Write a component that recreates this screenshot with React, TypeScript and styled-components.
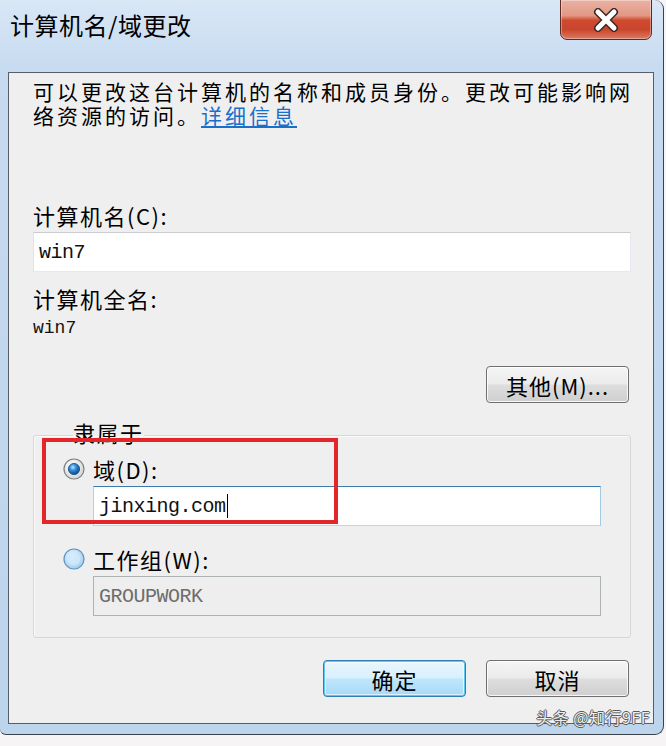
import React from 'react';
import styled, { createGlobalStyle } from 'styled-components';

const GlobalStyle = createGlobalStyle`
  html, body {
    margin: 0;
    padding: 0;
    background: #f6f4f4;
  }
  body {
    font-family: "Noto Sans CJK SC", "Noto Sans", sans-serif;
    color: #000;
  }
`;

const Radio: React.FC<{ checked?: boolean; id: string }> = ({ checked, id }) => (
  <RadioIcon width="22" height="22" viewBox="0 0 22 22">
    <defs>
      <radialGradient id={`${id}-ring`} cx="40%" cy="35%" r="70%">
        <stop offset="0%" stopColor={checked ? '#ffffff' : '#e8f5fd'} />
        <stop offset="100%" stopColor={checked ? '#d2d3d4' : '#9fcdef'} />
      </radialGradient>
      <radialGradient id={`${id}-dot`} cx="40%" cy="35%" r="65%">
        <stop offset="0%" stopColor="#b7e4ff" />
        <stop offset="45%" stopColor="#2d8ddc" />
        <stop offset="100%" stopColor="#0b4a8a" />
      </radialGradient>
    </defs>
    <circle cx="11" cy="11" r="10" fill={`url(#${id}-ring)`} stroke={checked ? '#7d8083' : '#5b94c4'} strokeWidth="1.2" />
    {checked ? (
      <circle cx="11" cy="11" r="5.6" fill={`url(#${id}-dot)`} stroke="#1b4a74" strokeWidth="0.8" />
    ) : (
      <circle cx="11" cy="11" r="6.5" fill="#cfe9fb" opacity="0.7" />
    )}
  </RadioIcon>
);

const App: React.FC = () => (
  <>
    <GlobalStyle />
    <Window>
      <TitleBar>
        <Title>计算机名/域更改</Title>
        <CloseButton aria-label="关闭">
          <svg width="34" height="24" viewBox="0 0 34 24">
            <path d="M9 4 L25 20 M25 4 L9 20" stroke="#3b2a28" strokeWidth="8" strokeLinecap="round" />
            <path d="M9 4 L25 20 M25 4 L9 20" stroke="#ffffff" strokeWidth="5" strokeLinecap="round" />
          </svg>
        </CloseButton>
      </TitleBar>

      <Panel>
        <Description>
          <DescLine>可以更改这台计算机的名称和成员身份。更改可能影响网</DescLine>
          <DescLine>
            络资源的访问。<DetailLink href="#">详细信息</DetailLink>
          </DescLine>
        </Description>

        <FieldLabel $top={74}>计算机名(C):</FieldLabel>
        <TextBox $top={5}>win7</TextBox>

        <FieldLabel $top={14}>计算机全名:</FieldLabel>
        <FullName>win7</FullName>

        <MoreRow>
          <DialogButton type="button">其他(M)...</DialogButton>
        </MoreRow>

        <GroupWrap>
          <GroupBox>
            <GroupTitle>隶属于</GroupTitle>
            <RadioRow>
              <Radio id="r-domain" checked />
              <RadioLabel>域(D):</RadioLabel>
            </RadioRow>
            <TextBox $state="focus" $indent={30}>
              jinxing.com<Caret />
            </TextBox>
            <RadioRow $top={18}>
              <Radio id="r-group" />
              <RadioLabel>工作组(W):</RadioLabel>
            </RadioRow>
            <TextBox $state="disabled" $indent={30}>GROUPWORK</TextBox>
          </GroupBox>
          <Highlight />
        </GroupWrap>

        <ButtonRow>
          <DialogButton type="button" $primary>确定</DialogButton>
          <DialogButton type="button">取消</DialogButton>
        </ButtonRow>
      </Panel>

      <Watermark>头条 @知行9FF</Watermark>
    </Window>
  </>
);

const Window = styled.div`
  position: relative;
  width: 664px;
  height: 735px;
  box-sizing: border-box;
  padding: 0 9px 10px 8px;
  background: linear-gradient(to bottom, #d9e7f6 0px, #c6daf0 72px, #bcd4ec 100%);
  border-right: 1px solid #3a414b;
  border-bottom: 1px solid #3a414b;
  border-radius: 0 9px 9px 6px;
  display: flex;
  flex-direction: column;
`;

const TitleBar = styled.div`
  height: 72px;
  display: flex;
  justify-content: space-between;
  align-items: flex-start;
  padding: 0 2px;
`;

const Title = styled.h1`
  margin: 11px 0 0;
  font-size: 24px;
  font-weight: 400;
  line-height: 28px;
  letter-spacing: 0.5px;
`;

const CloseButton = styled.div`
  width: 92px;
  height: 41px;
  margin-top: -1px;
  box-sizing: border-box;
  border: 1px solid #5b2a22;
  border-radius: 0 0 7px 7px;
  background: linear-gradient(
    to bottom,
    #eab2a4 0%,
    #e29883 40%,
    #cf4a2f 52%,
    #c9452b 75%,
    #dc7a5f 100%
  );
  box-shadow: inset 0 0 0 1px rgba(255, 255, 255, 0.35);
  display: flex;
  align-items: center;
  justify-content: center;
`;

const Panel = styled.div`
  height: 652px;
  box-sizing: border-box;
  border: 1px solid #585e66;
  background: #f0efef;
  padding: 8px 22px 0 24px;
  display: flex;
  flex-direction: column;
`;

const Description = styled.div`
  margin: 0 -22px 0 0;
  font-family: "Liberation Sans", "Noto Sans CJK SC", sans-serif;
  font-size: 21px;
  letter-spacing: 3px;
  line-height: 24px;
`;

const DescLine = styled.div`
  height: 24px;
  white-space: nowrap;
`;

const DetailLink = styled.a`
  color: #1a6fc9;
  text-decoration: underline;
`;

const FieldLabel = styled.div<{ $top: number }>`
  margin-top: ${p => p.$top}px;
  font-size: 22px;
  letter-spacing: 1.5px;
  line-height: 24px;
`;

const TextBox = styled.div<{ $top?: number; $indent?: number; $state?: 'normal' | 'focus' | 'disabled' }>`
  position: relative;
  margin-top: ${p => p.$top ?? 0}px;
  margin-left: ${p => p.$indent ?? 0}px;
  height: 40px;
  box-sizing: border-box;
  padding-left: 5px;
  display: flex;
  align-items: center;
  font-family: "Liberation Mono", "DejaVu Sans Mono", monospace;
  font-size: 20px;
  letter-spacing: -0.5px;
  border: 1px solid;
  ${p =>
    p.$state === 'focus'
      ? `border-color: #3d7bad #a4c9e3 #b7d9ed #b5cfe7; background: #fff; color: #111;`
      : p.$state === 'disabled'
      ? `border-color: #adb2b5; background: #efeeee; color: #6d6d6d;`
      : `border-color: #c9cbd0 #e3e9ef #e3e9ef #e2e3ea; background: #fff; color: #111;`}
`;

const Caret = styled.span`
  display: inline-block;
  width: 1px;
  height: 24px;
  margin-left: 1px;
  background: #000;
`;

const FullName = styled.div`
  margin-top: 8px;
  font-family: "Liberation Mono", "DejaVu Sans Mono", monospace;
  font-size: 18px;
  line-height: 20px;
  color: #111;
`;

const MoreRow = styled.div`
  margin-top: 28px;
  display: flex;
  justify-content: flex-end;
  padding-right: 2px;
`;

const DialogButton = styled.button<{ $primary?: boolean }>`
  width: 143px;
  height: 37px;
  box-sizing: border-box;
  padding: 0;
  font-family: "Noto Sans CJK SC", "Noto Sans", sans-serif;
  font-size: 22px;
  letter-spacing: 1px;
  color: #000;
  border-radius: 4px;
  border: 1px solid ${p => (p.$primary ? '#2d7fb5' : '#6f6f6f')};
  background: ${p =>
    p.$primary
      ? 'linear-gradient(to bottom, #eaf6fd 0%, #d9f0fc 48%, #bee6fd 52%, #a7d9f5 100%)'
      : 'linear-gradient(to bottom, #f5f5f5 0%, #ebebeb 48%, #dddddd 52%, #cfcfcf 100%)'};
  box-shadow: ${p =>
    p.$primary
      ? 'inset 0 0 0 1px #5fc8f2, inset 0 0 0 2px rgba(255,255,255,0.6)'
      : 'inset 0 0 0 1px rgba(255,255,255,0.8)'};
`;

const GroupWrap = styled.div`
  position: relative;
  margin-top: 18px;
`;

const GroupBox = styled.fieldset`
  margin: 0;
  padding: 5px 29px 21px 29px;
  border: 1px solid #d3d8dc;
  border-radius: 3px;
  box-shadow: inset 1px 1px 0 #fafafa;
`;

const GroupTitle = styled.legend`
  margin-left: 10px;
  padding: 0 0 6px;
  font-size: 22px;
  letter-spacing: 1.5px;
  line-height: 22px;
`;

const RadioRow = styled.div<{ $top?: number }>`
  margin-top: ${p => p.$top ?? 0}px;
  height: 30px;
  display: flex;
  align-items: center;
  gap: 8px;
  margin-bottom: 2px;
`;

const RadioIcon = styled.svg`
  flex: none;
`;

const RadioLabel = styled.span`
  font-size: 22px;
  letter-spacing: 1.5px;
  line-height: 30px;
`;

const Highlight = styled.div`
  position: absolute;
  left: 9px;
  top: 17px;
  width: 296px;
  height: 86px;
  box-sizing: border-box;
  border: 4px solid #e3262a;
  pointer-events: none;
`;

const ButtonRow = styled.div`
  margin-top: 22px;
  display: flex;
  justify-content: flex-end;
  gap: 20px;
  padding-right: 2px;
`;

const Watermark = styled.div`
  position: absolute;
  right: 13px;
  bottom: 5px;
  font-size: 16px;
  letter-spacing: 0.5px;
  color: #eeeeee;
  text-shadow: 1px 0 0 #5a5a5a, -1px 0 0 #5a5a5a, 0 1px 0 #5a5a5a, 0 -1px 0 #5a5a5a;
`;

export default App;
